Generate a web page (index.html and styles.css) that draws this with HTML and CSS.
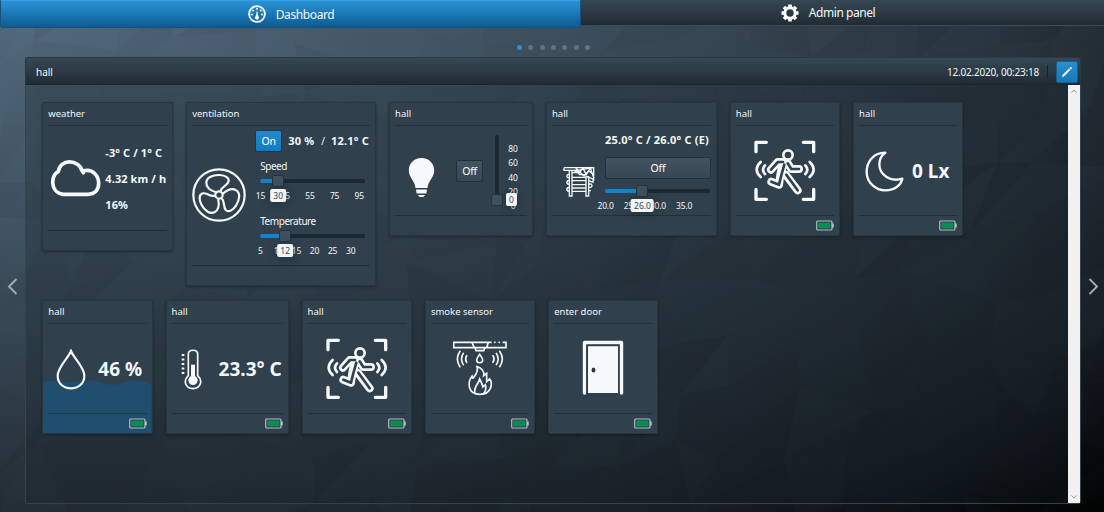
FILE: index.html
```html
<!DOCTYPE html>
<html lang="en">
<head>
<meta charset="utf-8">
<title>Dashboard</title>
<link rel="stylesheet" href="styles.css">
</head>
<body>
<svg class="mesh" id="mesh" viewBox="0 0 1104 512" aria-hidden="true"></svg>
<svg class="defs" aria-hidden="true">
  <symbol id="motion" viewBox="101 148 186 186">
    <g fill="none" stroke="#f5f9fc" stroke-linecap="round" stroke-linejoin="round">
      <path stroke-width="10" d="M107 183V155H138M249 155H280V183M107 296V326H138M280 296V326H249"/>
      <path stroke-width="8" d="M121 214q-24 22 0 45M134 224q-12 13 0 26M268 214q24 22 0 45M255 224q12 13 0 26"/>
      <path stroke-width="24" d="M152 237L172 214H200L213 235H236M190 220L180 252L176 282L153 273M180 252L186 224M196 252L232 299"/>
      <path stroke="#30404d" stroke-width="8" d="M152 237L173 214H188M213 235H236M202 218L213 235M176 282L153 273M176 282L184 250L192 222M198 252L232 299"/>
    </g>
    <circle cx="203" cy="193" r="14" fill="#30404d" stroke="#f5f9fc" stroke-width="8"/>
  </symbol>
  <symbol id="battery" viewBox="0 0 18 11">
    <rect x=".75" y="1" width="15.2" height="9" rx="1" fill="#263440" stroke="#b6c0c7" stroke-width="1.2"/>
    <rect x="2.2" y="2.4" width="12.4" height="6.2" fill="#0e8a55"/>
    <path d="M16.5 3.500h1v4h-1z" fill="#f4f7f9"/>
  </symbol>
</svg>

<nav class="tabs">
  <a class="tab tab-active">
    <svg width="18" height="18" viewBox="0 0 18 18"><circle cx="9" cy="9" r="7.9" fill="none" stroke="#fff" stroke-width="1.8"/><g fill="#fff"><circle cx="4" cy="9.6" r="1"/><circle cx="5.2" cy="5.5" r="1"/><circle cx="9" cy="3.7" r="1"/><circle cx="12.8" cy="5.5" r="1"/><circle cx="14" cy="9.6" r="1"/><path d="M9 5l1.200 6a2 2 0 1 1-2.400 0z"/></g></svg>
    <span>Dashboard</span>
  </a>
  <a class="tab tab-admin">
    <svg width="18" height="18" viewBox="-9 -9 18 18"><circle r="5.2" fill="none" stroke="#fff" stroke-width="3"/><path fill="none" stroke="#fff" stroke-width="3.600" d="M0-8.500V-5.500M0 8.500V5.500M-8.500 0H-5.500M8.500 0H5.500M-6-6L-4-4M6 6L4 4M-6 6L-4 4M6-6L4-4"/></svg>
    <span>Admin panel</span>
  </a>
</nav>

<div class="dots"><i class="dot dot-on"></i><i class="dot"></i><i class="dot"></i><i class="dot"></i><i class="dot"></i><i class="dot"></i><i class="dot"></i></div>

<div class="stage">
  <svg class="arrow" viewBox="0 0 25 18"><path d="M16.500 2L9 9.500L16.500 17"/></svg>
  <main class="panel">
    <header class="panel-head">
      <span class="room">hall</span>
      <time>12.02.2020, 00:23:18</time>
      <i class="sep"></i>
      <button class="edit"><svg width="12" height="12" viewBox="0 0 12 12"><path d="M1 11l.5-1.900L8 2.600l1.300 1.300L2.900 10.500zM8.600 2l.8-.8c.8-.5 1.900.5 1.400 1.400l-.9.8z" fill="#fff"/></svg></button>
    </header>
    <div class="panel-body">
      <div class="rows">
        <section class="row">
          <article class="card w-weather">
            <h2>weather</h2>
            <div class="body weather">
              <svg width="50" height="38" viewBox="60 208 150 114"><path d="M96 311C54 305 61 249 82 243C86 204 144 204 154 242C187 231 203 258 203 278C203 298 191 311 171 311Z" fill="none" stroke="#f5f9fc" stroke-width="11" stroke-linejoin="round"/><path d="M154 242L159 251" stroke="#f5f9fc" stroke-width="9"/></svg>
              <div class="lines"><b>-3° C / 1° C</b><b>4.32 km / h</b><b>16%</b></div>
            </div>
            <footer></footer>
          </article>

          <article class="card w-vent">
            <h2>ventilation</h2>
            <div class="body vent">
              <svg class="fan" width="54" height="54" viewBox="-81 -81 162 162"><g fill="none" stroke="#f5f9fc" stroke-width="6.500"><circle r="77"/><circle r="11"/><path id="blade" d="M-9-8C-24-13-39-22-38-38C-37-53-19-61 2-60C18-59 31-52 29-41C26-27 8-28 4-11"/><use href="#blade" transform="rotate(120)"/><use href="#blade" transform="rotate(240)"/></g></svg>
              <div class="vent-side">
                <div class="vent-top"><button class="btn btn-on">On</button><b>30 %</b><span>/</span><b>12.1° C</b></div>
                <label>Speed</label>
                <div class="slider speed"><div class="track"><i class="fill"></i><i class="thumb"></i></div><div class="ticks"><span>15</span><span>35</span><span>55</span><span>75</span><span>95</span></div><em class="tip">30</em></div>
                <label>Temperature</label>
                <div class="slider temp"><div class="track"><i class="fill"></i><i class="thumb"></i></div><div class="ticks"><span>5</span><span>10</span><span>15</span><span>20</span><span>25</span><span>30</span></div><em class="tip">12</em></div>
              </div>
            </div>
            <footer></footer>
          </article>

          <article class="card w-light">
            <h2>hall</h2>
            <div class="body light">
              <svg class="bulb" width="27" height="41" viewBox="0 0 27 41"><g fill="#f5f9fc"><path d="M13.500 1C6 1 .8 6.500.8 13.500C.8 21 7 23.500 7.500 31H19.500C20 23.500 26.200 21 26.200 13.500C26.200 6.500 21 1 13.500 1Z"/><path d="M8 32.500h11l-.6 4H8.600zM9.800 38h7.400l-2 2h-3.400z"/></g></svg>
              <button class="btn">Off</button>
              <div class="vslider"><div class="vtrack"><i class="thumb"></i></div><div class="vticks"><span>80</span><span>60</span><span>40</span><span>20</span><span>0</span></div><em class="tip">0</em></div>
            </div>
            <footer></footer>
          </article>

          <article class="card w-heat">
            <h2>hall</h2>
            <div class="body heat">
              <svg class="floor" width="32" height="32" viewBox="68 226 96 96"><g fill="none" stroke="#f5f9fc" stroke-width="4"><path d="M71 231H160V270M71 231V239H108M160 231L102 240L117 246L128 233L138 252L150 232L159 258M106 232L131 256L145 240L160 252M118 240L130 231M137 257L158 265V275L146 270"/><path d="M87 240V316H95V240M137 256V316H145V256"/><path d="M95 246H112L118 252H137M95 260H137M95 270H137M95 282H137M95 292H137M95 302H137M87 252H82Q77 256 82 261H87M87 270H82Q77 275 82 280H87M87 291H82Q77 296 82 301H87M145 280H152Q158 285 152 290H145M145 300H152"/></g></svg>
              <div class="heat-side">
                <b>25.0° C / 26.0° C (E)</b>
                <button class="btn">Off</button>
                <div class="slider heat-slider"><div class="track"><i class="fill"></i><i class="thumb"></i></div><div class="ticks"><span>20.0</span><span>25.0</span><span>30.0</span><span>35.0</span></div><em class="tip">26.0</em></div>
              </div>
            </div>
            <footer></footer>
          </article>

          <article class="card">
            <h2>hall</h2>
            <div class="body center"><svg width="62" height="62"><use href="#motion"/></svg></div>
            <footer><svg class="bat"><use href="#battery"/></svg></footer>
          </article>

          <article class="card">
            <h2>hall</h2>
            <div class="body lux">
              <svg width="39" height="41" viewBox="0 0 117 123"><path d="M61 5C20 5 5 38 5 62C5 95 32 118 61 118C91 118 108 101 112 83C75 95 43 70 43 40C43 25 50 12 61 5Z" fill="none" stroke="#f5f9fc" stroke-width="7" stroke-linejoin="round"/></svg>
              <strong>0 Lx</strong>
            </div>
            <footer><svg class="bat"><use href="#battery"/></svg></footer>
          </article>
        </section>

        <section class="row">
          <article class="card water">
            <h2>hall</h2>
            <svg class="wave" viewBox="0 0 110 53" preserveAspectRatio="none"><path d="M0 2C13-1 20 3 31 2S50-1 61 3S80 3 88 1S103 2 110 5V53H0Z" fill="#1f4e6e"/></svg>
            <div class="body humid">
              <svg width="30" height="41" viewBox="0 0 90 123"><path d="M45 6C37 27 5 54 5 80C5 104 23 118 45 118S85 104 85 80C85 54 53 27 45 6Z" fill="none" stroke="#f5f9fc" stroke-width="6.500"/></svg>
              <strong>46 %</strong>
            </div>
            <footer><svg class="bat"><use href="#battery"/></svg></footer>
          </article>

          <article class="card w-thermo">
            <h2>hall</h2>
            <div class="body thermo">
              <svg width="21" height="41" viewBox="452 172 63 123"><path d="M474 252V187C474 172 502 172 502 187V252C518 266 512 290 488 291C464 290 458 266 474 252Z" fill="none" stroke="#f5f9fc" stroke-width="5"/><circle cx="488" cy="266" r="14" fill="#f5f9fc"/><path d="M488 262V219" stroke="#f5f9fc" stroke-width="12"/><path d="M458 187V249" stroke="#f5f9fc" stroke-width="8" stroke-dasharray="6 7.500"/></svg>
              <strong>23.3° C</strong>
            </div>
            <footer><svg class="bat"><use href="#battery"/></svg></footer>
          </article>

          <article class="card">
            <h2>hall</h2>
            <div class="body center"><svg width="62" height="62"><use href="#motion"/></svg></div>
            <footer><svg class="bat"><use href="#battery"/></svg></footer>
          </article>

          <article class="card">
            <h2>smoke sensor</h2>
            <div class="body center">
              <svg width="54" height="55" viewBox="489 151 162 165"><g fill="none" stroke="#f5f9fc" stroke-width="5" stroke-linecap="round"><path d="M605 155H595L590 171H648V155H638M595 155H491V171H590M546 156L553 171H588M555 171L558 180H581L585 171" stroke-linecap="butt"/><path d="M614 155h1M627 155h1"/><path d="M569 191C565 198 560 202 560 208C560 219 578 219 578 208C578 202 573 198 569 191Z"/><path d="M510 182Q494 205 510 228M520 188Q509 205 520 222M530 195Q524 205 530 215M629 182Q645 205 629 228M619 188Q630 205 619 222M609 195Q615 205 609 215"/><path d="M561 228C566 245 556 251 550 262Q547 265 546 257C532 274 532 311 570 311C606 311 608 277 599 265L590 273V248L581 255C584 242 574 232 561 228Z"/><path d="M555 308C549 290 565 282 569 265C575 276 577 282 579 289L586 282C590 292 586 305 580 309"/></g></svg>
            </div>
            <footer><svg class="bat"><use href="#battery"/></svg></footer>
          </article>

          <article class="card">
            <h2>enter door</h2>
            <div class="body center">
              <svg class="door" width="42" height="55" viewBox="0 0 42 55"><path d="M2.500 53V2.500H39.500V53" fill="none" stroke="#f5f9fc" stroke-width="3.400" stroke-linecap="round" stroke-linejoin="round"/><path d="M6 6H36V53H6z" fill="#f5f9fc"/><path d="M5.500 5.500H36.500" stroke="#2a3d49" stroke-width="1.400"/><path d="M4.700 5V53M36.800 5V53" stroke="#30404d"/><ellipse cx="11.500" cy="30" rx="2" ry="2.500" fill="#263743"/></svg>
            </div>
            <footer><svg class="bat"><use href="#battery"/></svg></footer>
          </article>
        </section>
      </div>
      <div class="scroll"><svg viewBox="0 0 12 12"><path d="M3.500 7.500L6 5L8.500 7.500"/></svg><svg viewBox="0 0 12 12"><path d="M3.500 4.500L6 7L8.500 4.500"/></svg></div>
    </div>
  </main>
  <svg class="arrow" viewBox="0 0 23 18"><path d="M8.500 2L16 9.500L8.500 17"/></svg>
</div>
<script src="mesh.js"></script>
</body>
</html>
```
FILE: styles.css
```css
* { box-sizing: border-box; }
body {
  margin: 0; width: 1104px; height: 512px; overflow: hidden;
  display: flex; flex-direction: column;
  background: radial-gradient(ellipse farthest-corner at 0 0, #546c7f 0%, #3d4f5d 35%, #252f38 68%, #171d23 84%, #000 100%);
  color: #f3f7fa; font: 10px/14px "Noto Sans", "Open Sans", sans-serif;
}
h2, button, label, b, strong, em { font: inherit; margin: 0; }
svg { display: block; flex: none; }
.defs { position: absolute; width: 0; height: 0; }
.mesh { position: absolute; left: 0; top: 0; width: 1104px; height: 512px; z-index: -1; }

.tabs { display: flex; height: 28px; flex: none; align-items: flex-start; }
.tab { display: flex; align-items: center; justify-content: center; gap: 10px; font-size: 12px; letter-spacing: -.45px; }
.tab-active { width: 581px; height: 28px; padding-left: 1px; background: linear-gradient(#2a92d6, #0d5c93); border: 1px solid #1b5077; border-top-color: #329ee0; border-radius: 0 0 3px 3px; }
.tab-active span { margin-top: 1px; letter-spacing: -.4px; }
.tab-admin { width: 523px; height: 26px; padding-right: 29px; background: linear-gradient(#364753, #202c34); border-bottom: 1px solid #3b4a55; }
.tab-admin span { margin-top: 1px; letter-spacing: -.8px; letter-spacing: -.45px; }

.dots { display: flex; justify-content: center; gap: 6.300px; height: 29px; padding: 16.500px 0 0 3px; flex: none; }
.dot { width: 5px; height: 5px; border-radius: 50%; background: #617384; }
.dot-on { background: #2394dc; }

.stage { display: flex; height: 447px; align-items: center; }
.arrow { width: 25px; height: 18px; flex: none; margin-top: 10px; fill: none; stroke: #a3adb4; stroke-width: 1.900; }
.arrow:last-child { width: 23px; }

.panel { width: 1056px; height: 447px; border: 1px solid #35434e; border-top: 0; border-radius: 3px; background: rgba(23, 33, 41, .28); display: flex; flex-direction: column; }
.panel-head { display: flex; align-items: center; height: 28px; flex: none; margin: 0 -1px; padding: 1px 2px 0 10px; background: linear-gradient(#364854, #202c34); border: 1px solid #2b3842; border-bottom-color: #1c262d; border-radius: 3px 3px 0 0; }
.room { margin-right: auto; }
.panel-head time { letter-spacing: -.2px; }
.sep { width: 1px; height: 13px; background: #182229; margin: 0 8px; }
.edit { width: 22px; height: 22px; padding: 0; border: 1px solid #17608f; border-radius: 2px; background: linear-gradient(#2a8ed0, #1378bd); display: flex; align-items: center; justify-content: center; }
.panel-body { display: flex; flex: 1; }
.rows { flex: 1; padding: 17px 0 0 16.300px; display: flex; flex-direction: column; gap: 14px; }
.row { display: flex; gap: 13px; align-items: flex-start; }
.row:first-child { gap: 12.900px; }
.scroll { width: 12px; background: #f1f1f1; display: flex; flex-direction: column; justify-content: space-between; }
.scroll svg { fill: none; stroke: #9a9a9a; }

.card { position: relative; width: 110.300px; height: 134px; padding: 0 5px; display: flex; flex-direction: column; background: #30404d; border: 1px solid #283640; border-radius: 2px; box-shadow: 0 1px 3px rgba(0, 0, 0, .35); }
.card h2 { height: 23px; padding-top: 4px; font-size: 9.500px; border-bottom: 1.500px solid #25323c; flex: none; }
.card .body { flex: 1; min-height: 0; display: flex; margin: 0 1px; }
.card footer { height: 20px; border-top: 1px solid #222f38; flex: none; display: flex; justify-content: flex-end; padding-top: 4px; }
.bat { width: 18px; height: 11px; }
b { font-weight: 700; font-size: 11px; }
strong { font-weight: 700; font-size: 19px; line-height: 24px; white-space: nowrap; }
.center { align-items: center; justify-content: center; }
.w-weather { width: 131px; height: 149px; }
.w-vent { width: 190px; height: 184px; }
.w-light { width: 144px; }
.w-heat { width: 171px; }
.w-thermo { width: 123px; }

.weather { align-items: center; gap: 4px; padding: 1px 0 0 2px; }
.lines b { display: block; line-height: 26px; white-space: nowrap; font-size: 11px; letter-spacing: .1px; }

.btn { height: 22px; width: 27px; padding: 0; color: #fff; text-align: center; font-size: 10.500px; letter-spacing: -.2px; border: 1px solid #22303a; border-radius: 2px; background: linear-gradient(#435461, #364753); }
.btn-on { background: linear-gradient(#2488cb, #157bc0); border-color: #1b3a50; }
.fan { margin: 42px 0 0 -1.500px; }
.vent-side { padding: 4px 0 0 9.500px; }
.vent-top { display: flex; align-items: center; white-space: nowrap; margin-bottom: 7px; }
.vent-top b { margin-left: 6px; letter-spacing: .2px; }
.vent-top b + span { margin-left: 7px; }
.vent-side label { display: block; margin-left: 5px; height: 15px; line-height: 15px; letter-spacing: -.45px; }

.slider { position: relative; width: 105px; height: 39.500px; margin-left: 5px; padding-top: 5px; }
.track { position: relative; height: 4px; border-radius: 2px; background: #1d2830; }
.fill { display: block; height: 4px; border-radius: 2px 0 0 2px; background: #1583c9; }
.thumb { position: absolute; top: -4px; width: 12px; height: 12px; border: 1px solid #25323b; border-radius: 2px; background: #40515e; }
.ticks { display: flex; margin-top: 6px; font-size: 8.500px; line-height: 13px; letter-spacing: -.2px; }
.ticks span { flex: none; width: 24.700px; text-align: center; }
.tip { position: absolute; height: 13px; padding: 0 3px; line-height: 13px; font-size: 8.500px; background: #f3f6f8; color: #34434f; border-radius: 2px; box-shadow: 0 1px 8px rgba(20, 28, 35, .5); }
.slider .tip { top: 15px; transform: translateX(-50%); }
.speed .fill { width: 13px; } .speed .thumb { left: 12px; } .speed .tip { left: 18px; }
.speed .ticks { margin-left: -12px; }
.temp .fill { width: 20px; } .temp .thumb { left: 19px; } .temp .tip { left: 25px; }
.temp .ticks { margin-left: -9px; } .temp .ticks span { width: 18.100px; }

.bulb { margin: 31px 21px 0 12px; }
.light .btn { margin-top: 34px; }
.vslider { position: relative; display: flex; margin: 9px 0 0 12px; }
.vtrack { position: relative; width: 4px; height: 70px; border-radius: 2px; background: #1d2830; }
.vslider .thumb { top: 59px; left: -4px; }
.vticks { display: flex; flex-direction: column; width: 20px; margin: 7px 0 0 4px; text-align: center; font-size: 8.500px; line-height: 14.300px; }
.vticks span { height: 14.300px; }
.vslider .tip { left: 11px; top: 58px; }

.floor { margin: 40px 10px 0 9px; }
.heat-side { padding-top: 7px; width: 106px; }
.heat { padding-left: 1px; }
.heat-side b { display: block; white-space: nowrap; letter-spacing: .2px; }
.heat-side .btn { width: 106px; margin-top: 10px; }
.heat-slider { margin: 5px 0 0; }
.heat-slider .fill { width: 31px; } .heat-slider .thumb { left: 31px; } .heat-slider .tip { left: 37.500px; }
.heat-slider .ticks { margin-left: -12.500px; } .heat-slider .ticks span { width: 26.200px; }

.lux, .humid, .thermo { align-items: center; padding-top: 1px; }
.lux { padding-left: 5px; gap: 8px; }
.humid { padding-left: 7px; gap: 12px; position: relative; }
.thermo { padding-left: 8px; gap: 17px; }
.door { margin-top: -3px; }
.water footer { position: relative; border-top-color: #1f3b4e; }
.wave { position: absolute; left: 0; bottom: 0; width: 100%; height: 53px; }
```
FILE: mesh.js
```js
// Faint triangulated facets over the page gradient.
(function () {
  var seed = 7;
  function rnd() { seed = (seed * 16807) % 2147483647; return seed / 2147483647; }
  var cols = 19, rows = 10, pts = [];
  for (var r = 0; r <= rows; r++) {
    pts[r] = [];
    for (var c = 0; c <= cols; c++) {
      pts[r][c] = [(c - 0.5) * 62 + rnd() * 42, (r - 0.5) * 58 + rnd() * 42];
    }
  }
  var html = '';
  function tri(a, b, d) {
    var light = rnd() > 0.5;
    html += '<polygon points="' + [a, b, d].join(' ') + '" fill="' +
      (light ? '#7fa0a8' : '#000') + '" fill-opacity="' + (rnd() * (light ? 0.022 : 0.05)).toFixed(3) + '"/>';
  }
  for (r = 0; r < rows; r++) for (c = 0; c < cols; c++) {
    tri(pts[r][c], pts[r][c + 1], pts[r + 1][c]);
    tri(pts[r][c + 1], pts[r + 1][c + 1], pts[r + 1][c]);
  }
  document.getElementById('mesh').innerHTML = html;
})();
```
